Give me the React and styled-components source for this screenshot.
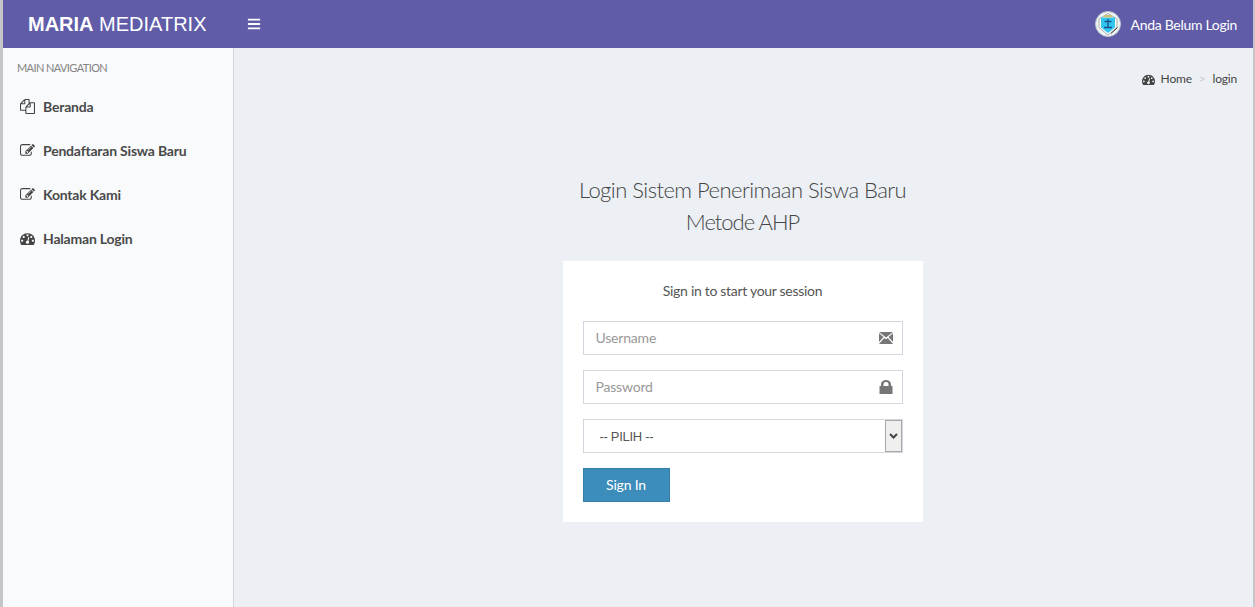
import React from 'react'
import styled, { createGlobalStyle } from 'styled-components'
import { FaBars } from 'react-icons/fa'

const GlobalStyle = createGlobalStyle`
  html, body {
    margin: 0;
    height: 100%;
    overflow: hidden;
    background: #c4c6c8;
  }
  * { box-sizing: border-box; }
`

const Page = styled.div`
  margin: 0 2px 0 3px;
  height: 607px;
  display: flex;
  flex-direction: column;
  font-family: 'Lato', 'Liberation Sans', sans-serif;
  font-size: 14px;
  color: #333;
  background: #ecf0f5;
`

const Navbar = styled.header`
  height: 48px;
  flex: none;
  display: flex;
  align-items: center;
  background: #605ca8;
  color: #fff;
`

const Logo = styled.div`
  width: 230px;
  padding-left: 25px;
  font-family: 'Liberation Sans', Arial, sans-serif;
  font-size: 20px;
  b { font-weight: 700; }
`

const Burger = styled.span`
  margin-left: 14px;
  display: flex;
  font-size: 14px;
`

const UserMenu = styled.div`
  margin-left: auto;
  padding-right: 16px;
  display: flex;
  align-items: center;
  gap: 10px;
  letter-spacing: -0.3px;
`

const Body = styled.div`
  flex: 1;
  display: flex;
  min-height: 0;
`

const Sidebar = styled.aside`
  width: 231px;
  flex: none;
  background: #f9fafc;
  border-right: 1px solid #d2d6de;
`

const SideHeader = styled.div`
  padding: 12px 14px 9px;
  font-size: 11px;
  line-height: 15px;
  letter-spacing: -0.6px;
  color: #848484;
`

const MenuItem = styled.a`
  height: 44px;
  padding-left: 17px;
  display: flex;
  align-items: center;
  gap: 8px;
  font-weight: 700;
  letter-spacing: -0.2px;
  color: #4a4a4a;
  svg { width: 15px; height: 15px; fill: #444; flex: none; }
`

const Main = styled.main`
  flex: 1;
  padding: 23px 15px 0;
`

const Breadcrumb = styled.ol`
  margin: 0 1px 0 0;
  padding: 0;
  list-style: none;
  display: flex;
  justify-content: flex-end;
  align-items: center;
  font-size: 12px;
  line-height: 16px;
  letter-spacing: -0.2px;
  color: #444;
  svg { width: 13px; height: 13px; fill: #444; margin-right: 6px; }
`

const Sep = styled.span`
  margin: 0 7px;
  color: #ccc;
`

const LoginBox = styled.section`
  width: 360px;
  margin: 87px 0 0 calc(50% - 181px);
`

const Title = styled.h1`
  margin: 0 0 23px;
  text-align: center;
  font-size: 22px;
  line-height: 32px;
  font-weight: 300;
  letter-spacing: -0.53px;
  color: #444;
`

const TitleLine = styled.span`
  display: block;
  letter-spacing: ${(props) => props.$spacing}px;
`

const Card = styled.div`
  background: #fff;
  padding: 20px;
  height: 261px;
`

const Lead = styled.p`
  margin: 0 0 20px;
  height: 20px;
  line-height: 20px;
  text-align: center;
  letter-spacing: -0.3px;
  color: #555;
`

const Field = styled.div`
  position: relative;
  margin-bottom: 15px;
  height: 34px;
`

const Input = styled.input`
  width: 100%;
  height: 34px;
  padding: 5px 12px 7px;
  border: 1px solid #d2d6de;
  background: #fff;
  font: inherit;
  letter-spacing: -0.2px;
  color: #555;
  outline: none;
  &::placeholder { color: #999; opacity: 1; }
`

const FieldIcon = styled.svg`
  position: absolute;
  right: 10px;
  top: ${(props) => props.$top}px;
  width: 14px;
  height: ${(props) => props.$height}px;
  fill: #777;
`

const Select = styled.select`
  width: 100%;
  height: 34px;
  padding: 6px 16px;
  border: 1px solid #d2d6de;
  border-radius: 0;
  appearance: none;
  background: #fff;
  font-family: 'Liberation Sans', Arial, sans-serif;
  font-size: 13px;
  letter-spacing: -0.3px;
  color: #555;
  outline: none;
`

const SelectArrow = styled.span`
  position: absolute;
  right: 1px;
  top: 1px;
  width: 17px;
  height: 32px;
  display: flex;
  align-items: center;
  justify-content: center;
  background: #efefef;
  border: 1px solid #a9a9a9;
  pointer-events: none;
  svg { width: 9px; height: 6px; fill: none; stroke: #444; stroke-width: 2; }
`

const SubmitButton = styled.button`
  width: 87px;
  height: 34px;
  background: #3c8dbc;
  border: 1px solid #367fa9;
  color: #fff;
  font: inherit;
  letter-spacing: -0.2px;
  padding: 0 0 2px;
`

const FILES = 'M1696 384q40 0 68 28t28 68v1216q0 40-28 68t-68 28h-960q-40 0-68-28t-28-68v-288h-544q-40 0-68-28t-28-68v-672q0-40 20-88t48-76l408-408q28-28 76-48t88-20h416q40 0 68 28t28 68v328q68-40 128-40h416zm-544 213l-299 299h299v-299zm-640-384l-299 299h299v-299zm196 647l316-316v-416h-384v416q0 40-28 68t-68 28h-416v640h512v-256q0-40 20-88t48-76zm956 804v-1152h-384v416q0 40-28 68t-68 28h-416v640h896z'
const EDIT = 'M888 1184l116-116-152-152-116 116v56h96v96h56zm440-720q-16-16-33 1l-350 350q-17 17-1 33t33-1l350-350q17-17 1-33zm80 594v190q0 119-84.5 203.5t-203.5 84.5h-832q-119 0-203.5-84.5t-84.5-203.5v-832q0-119 84.5-203.5t203.5-84.5h832q63 0 117 25 15 7 18 23 3 17-9 29l-49 49q-14 14-32 8-23-6-45-6h-832q-66 0-113 47t-47 113v832q0 66 47 113t113 47h832q66 0 113-47t47-113v-126q0-13 9-22l64-64q15-15 35-7t20 29zm-96-738l288 288-672 672h-288v-288zm444 132l-92 92-288-288 92-92q28-28 68-28t68 28l152 152q28 28 28 68t-28 68z'
const GAUGE = 'M384 1152q0-53-37.5-90.5t-90.5-37.5-90.5 37.5-37.5 90.5 37.5 90.5 90.5 37.5 90.5-37.5 37.5-90.5zm192-448q0-53-37.5-90.5t-90.5-37.5-90.5 37.5-37.5 90.5 37.5 90.5 90.5 37.5 90.5-37.5 37.5-90.5zm428 481l101-382q6-26-7.5-48.5t-38.5-29.5-48 6.5-30 39.5l-101 382q-60 5-107 43.5t-63 98.5q-20 77 20 146t117 89 146-20 89-117q16-60-6-117t-72-91zm660-33q0-53-37.5-90.5t-90.5-37.5-90.5 37.5-37.5 90.5 37.5 90.5 90.5 37.5 90.5-37.5 37.5-90.5zm-640-640q0-53-37.5-90.5t-90.5-37.5-90.5 37.5-37.5 90.5 37.5 90.5 90.5 37.5 90.5-37.5 37.5-90.5zm448 192q0-53-37.5-90.5t-90.5-37.5-90.5 37.5-37.5 90.5 37.5 90.5 90.5 37.5 90.5-37.5 37.5-90.5zm320 448q0 261-141 483-19 29-54 29h-1402q-35 0-54-29-141-221-141-483 0-182 71-348t191-286 286-191 348-71 348 71 286 191 191 286 71 348z'

const Fa = ({ d }) => (
  <svg viewBox="0 0 1792 1792"><path d={d} /></svg>
)

const SchoolLogo = () => (
  <svg width="26" height="26" viewBox="0 0 26 26">
    <circle cx="13" cy="13" r="12.5" fill="#f2f5f5" stroke="#b9c4c8" strokeWidth="1" />
    <path d="M4 8l9-5.5L22 8v8.5L13 24l-9-7.5z" fill="#fff" stroke="#8d959b" strokeWidth="0.8" />
    <path d="M6 6.5h14v10L13 22l-7-5.5z" fill="#30c6f0" />
    <rect x="9" y="4" width="8" height="2.5" fill="#c9c27a" />
    <path d="M13 8v9M9.5 10.5h7M9 16.5h8" stroke="#1a4f8a" strokeWidth="1.3" fill="none" />
    <path d="M16 22.5l6.5-6" stroke="#333" strokeWidth="1" />
  </svg>
)

const menu = [
  { label: 'Beranda', icon: FILES },
  { label: 'Pendaftaran Siswa Baru', icon: EDIT },
  { label: 'Kontak Kami', icon: EDIT },
  { label: 'Halaman Login', icon: GAUGE },
]

const App = () => {
  return (
    <Page>
      <GlobalStyle />
      <Navbar>
        <Logo><b>MARIA</b> MEDIATRIX</Logo>
        <Burger><FaBars /></Burger>
        <UserMenu>
          <SchoolLogo />
          <span>Anda Belum Login</span>
        </UserMenu>
      </Navbar>
      <Body>
        <Sidebar>
          <SideHeader>MAIN NAVIGATION</SideHeader>
          {menu.map((item) => (
            <MenuItem key={item.label}>
              <Fa d={item.icon} />
              {item.label}
            </MenuItem>
          ))}
        </Sidebar>
        <Main>
          <Breadcrumb>
            <Fa d={GAUGE} />
            <li>Home</li>
            <Sep>&gt;</Sep>
            <li>login</li>
          </Breadcrumb>
          <LoginBox>
            <Title>
              <TitleLine $spacing={-0.53}>Login Sistem Penerimaan Siswa Baru</TitleLine>
              <TitleLine $spacing={-1}>Metode AHP</TitleLine>
            </Title>
            <Card>
              <Lead>Sign in to start your session</Lead>
              <Field>
                <Input placeholder="Username" />
                <FieldIcon $top={11} $height={12} viewBox="0 0 14 12">
                  <path d="M0 0h14L7 5.5zM0 1.2L4.5 5 0 10zM14 1.2L9.5 5 14 10zM0 12l5.2-6L7 7.3 8.8 6 14 12z" />
                </FieldIcon>
              </Field>
              <Field>
                <Input placeholder="Password" />
                <FieldIcon $top={10} $height={14} viewBox="0 0 14 14">
                  <path fillRule="evenodd" d="M0.5 6H2V4a5 4 0 0 1 10 0v2h1.5v8H0.5zM4.5 6h5V4a2.5 2 0 0 0-5 0z" />
                </FieldIcon>
              </Field>
              <Field>
                <Select defaultValue="">
                  <option value="">-- PILIH --</option>
                </Select>
                <SelectArrow>
                  <svg viewBox="0 0 9 6"><path d="M1 1l3.5 3.5L8 1" /></svg>
                </SelectArrow>
              </Field>
              <SubmitButton type="button">Sign In</SubmitButton>
            </Card>
          </LoginBox>
        </Main>
      </Body>
    </Page>
  )
}

export default App
